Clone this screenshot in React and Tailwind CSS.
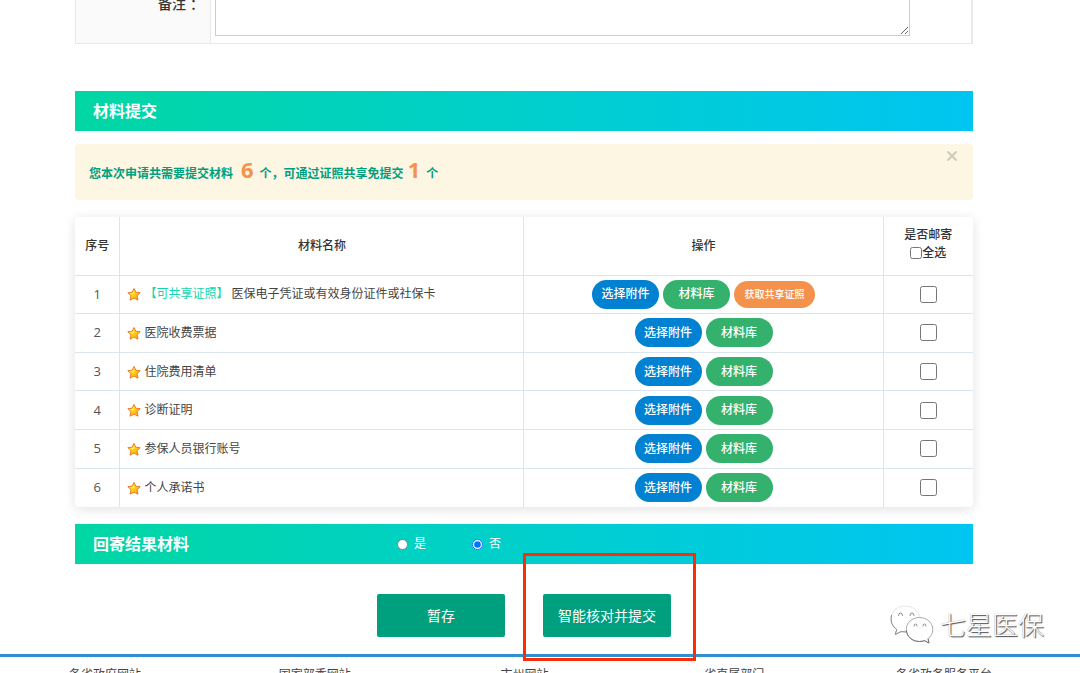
import { useState } from 'react';

const materials = [
  { id: 1, name: '医保电子凭证或有效身份证件或社保卡', shared: true },
  { id: 2, name: '医院收费票据' },
  { id: 3, name: '住院费用清单' },
  { id: 4, name: '诊断证明' },
  { id: 5, name: '参保人员银行账号' },
  { id: 6, name: '个人承诺书' },
];

const footerLinks = ['各省政府网站', '国家部委网站', '市州网站', '省直属部门', '各省政务服务平台'];

const StarIcon = () => (
  <svg width="14" height="14" viewBox="0 0 14 14" className="shrink-0" aria-hidden="true">
    <defs>
      <linearGradient id="star" x1="0" y1="0" x2="1" y2="1">
        <stop offset="0.2" stopColor="#fff02a" />
        <stop offset="1" stopColor="#ff9500" />
      </linearGradient>
    </defs>
    <path
      d="M7 1.5 L8.8 5.2 L13.2 5.7 L10 8.7 L11 13.2 L7 11.1 L3 13.2 L4 8.7 L0.8 5.7 L5.2 5.2 Z"
      fill="url(#star)"
      stroke="#ec7c2c"
      strokeLinejoin="round"
    />
    <path d="M6.6 4 L7.2 6.4 L5.8 7.6 L3.6 6.4 L5.8 6 Z" fill="#fff36a" />
  </svg>
);

const ChatLogo = () => (
  <svg width="44" height="40" viewBox="0 0 44 40" aria-hidden="true">
    <g fill="#fff" strokeLinejoin="round">
      <path d="M15.5 1 C7 1 1 7 1 14.2 C1 18.4 3.2 22 6.7 24.4 L5.3 29.5 L11 26.6 C12.5 27 14 27.2 16 27.2 L30 14 C29.5 6.5 23.5 1 15.5 1 Z" stroke="#dedede" strokeWidth="0.8" />
      <path d="M1.6 10 C0 17 2.5 21.5 6.7 24.4 L5.3 29.5 L11 26.6 L17 27" fill="none" stroke="#888" />
      <path d="M29.5 12.5 C22 12.5 16.3 17.8 16.3 24.5 C16.3 31.2 22 36.5 29.5 36.5 C31.3 36.5 33 36.2 34.6 35.7 L39 38 L38 33.7 C41 31.5 42.8 28.2 42.8 24.5 C42.8 17.8 37 12.5 29.5 12.5 Z" stroke="#aaa" />
      <path d="M16.3 25 C16.8 31.5 22 36.5 29.5 36.5 C31.3 36.5 33 36.2 34.6 35.7 L39 38 L38 33.7" fill="none" stroke="#777" />
    </g>
    <g fill="none" stroke="#8a8a8a" strokeLinecap="round">
      <path d="M8.5 10.5 a2 2.5 0 0 1 4 0" />
      <path d="M20 10.5 a2 2.5 0 0 1 4 0" />
      <path d="M24 21 a1.5 2 0 0 1 3 0" />
      <path d="M33 21 a1.5 2 0 0 1 3 0" />
    </g>
  </svg>
);

const SectionBar = ({ title, children }) => (
  <div className="flex h-10 items-center bg-linear-to-r from-[#00d7a3] to-[#00c5f1] text-white">
    <h2 className="w-[322px] pl-[18px] text-base font-bold">{title}</h2>
    {children}
  </div>
);

const App = () => {
  const [checked, setChecked] = useState([]);
  const [sendBack, setSendBack] = useState('no');
  const [showTip, setShowTip] = useState(true);

  const allChecked = checked.length === materials.length;

  const toggle = (id) => {
    setChecked(checked.includes(id) ? checked.filter((c) => c !== id) : [...checked, id]);
  };

  const toggleAll = () => {
    setChecked(allChecked ? [] : materials.map((m) => m.id));
  };

  return (
    <div className="relative h-screen overflow-hidden bg-white font-['Open_Sans','Noto_Sans_CJK_SC',sans-serif] text-xs text-[#444]">
      <main className="pl-[75px] pr-[107px]">
        {/* tail of the application form */}
        <div className="flex h-11 items-end overflow-hidden">
          <div className="flex w-full shrink-0 border border-r-2 border-[#e8e8e8]">
            <label htmlFor="remark" className="flex w-[135px] items-center justify-end gap-1 border-r border-[#e8e8e8] bg-[#fafafa] pr-[6px] text-sm font-medium text-[#333]">
              <span>备注</span>
              <span>：</span>
            </label>
            <div className="flex-1 py-[7px] pl-1 pr-[61px]">
              <textarea id="remark" className="block h-16 w-full border border-[#ccc] bg-white" />
            </div>
          </div>
        </div>

        <div className="mt-[47px]">
          <SectionBar title="材料提交" />
        </div>

        {showTip && (
          <div className="mt-[13px] flex h-14 items-start justify-between rounded-sm bg-[#fdf6e3] pl-[14px] pr-4">
            <p className="flex items-baseline pt-[10px] font-bold leading-[30px] text-[#009f7e]">
              您本次申请共需要提交材料
              <span className="ml-2 mr-[6px] text-[22px] text-[#f4924c]">6</span>
              个，可通过证照共享免提交
              <span className="ml-1 mr-[6px] text-[22px] text-[#f4924c]">1</span>
              个
            </p>
            <button type="button" aria-label="关闭" onClick={() => setShowTip(false)} className="pt-[7px] text-[#cfcbbb]">
              <svg width="10" height="10" viewBox="0 0 10 10" fill="none" stroke="currentColor" strokeWidth="2">
                <path d="M0.5 0.5 L9.5 9.5 M9.5 0.5 L0.5 9.5" />
              </svg>
            </button>
          </div>
        )}

        <div className="mt-[17px] rounded-sm shadow-[0_2px_12px_rgba(0,0,0,0.12)]">
          <table className="h-[290px] w-full table-fixed border-collapse text-center">
            <thead>
              <tr className="h-[58px] border-b border-[#dbe5ef] text-[#333]">
                <th className="w-[5%] border-r border-[#dbe5ef] font-medium">序号</th>
                <th className="w-[45%] border-r border-[#dbe5ef] font-medium">材料名称</th>
                <th className="w-[40%] border-r border-[#dbe5ef] font-medium">操作</th>
                <th className="w-[10%] pb-1 font-medium leading-[18px]">
                  是否邮寄
                  <label className="flex items-center justify-center">
                    <input type="checkbox" checked={allChecked} onChange={toggleAll} className="size-3" />
                    全选
                  </label>
                </th>
              </tr>
            </thead>
            <tbody>
              {materials.map((item) => (
                <tr key={item.id} className="h-[38px] border-b border-[#dbe5ef] last:border-b-0">
                  <td className="border-r border-[#dbe5ef] text-[13px] text-[#555]">{item.id}</td>
                  <td className="border-r border-[#dbe5ef]">
                    <div className="flex items-center gap-[3px] pl-[7px]">
                      <StarIcon />
                      {item.shared && <span className="text-[#12d6ae]">【可共享证照】</span>}
                      <span>{item.name}</span>
                    </div>
                  </td>
                  <td className="border-r border-[#dbe5ef]">
                    <div className="flex items-center justify-center gap-1 font-medium text-white">
                      <button type="button" className="h-[29px] w-[67px] rounded-full bg-[#0081d2]">选择附件</button>
                      <button type="button" className="h-[29px] w-[67px] rounded-full bg-[#33b16d]">材料库</button>
                      {item.shared && (
                        <button type="button" className="h-[27px] w-[81px] rounded-full bg-[#f4924c] text-[10px]">获取共享证照</button>
                      )}
                    </div>
                  </td>
                  <td>
                    <input
                      type="checkbox"
                      aria-label={item.name}
                      checked={checked.includes(item.id)}
                      onChange={() => toggle(item.id)}
                      className="mx-auto block size-[17px]"
                    />
                  </td>
                </tr>
              ))}
            </tbody>
          </table>
        </div>

        <div className="mt-[17px]">
          <SectionBar title="回寄结果材料">
            <div className="flex gap-[46px]">
              <label className="flex items-center gap-[6px]">
                <input type="radio" name="sendBack" checked={sendBack === 'yes'} onChange={() => setSendBack('yes')} className="size-[11px]" />
                是
              </label>
              <label className="flex items-center gap-[6px]">
                <input type="radio" name="sendBack" checked={sendBack === 'no'} onChange={() => setSendBack('no')} className="size-[11px]" />
                否
              </label>
            </div>
          </SectionBar>
        </div>

        <div className="mt-[30px] flex justify-center gap-[38px] text-sm text-white">
          <button type="button" className="h-[43px] w-32 rounded-xs bg-[#009f7e]">暂存</button>
          <div className="relative">
            <button type="button" className="h-[43px] w-32 rounded-xs bg-[#009f7e]">智能核对并提交</button>
            <span className="pointer-events-none absolute -bottom-6 -left-5 -right-[25px] -top-[41px] z-10 border-3 border-[#fb2c08]" />
          </div>
        </div>
      </main>

      <footer className="mt-[17px] border-t-3 border-[#3090d0] pt-2">
        <nav className="mr-[31px] grid grid-cols-5 text-center">
          {footerLinks.map((link) => (
            <a key={link} href="#" className="leading-5">{link}</a>
          ))}
        </nav>
      </footer>

      {/* account watermark */}
      <div className="absolute bottom-7 right-9 flex items-center gap-[6px] text-[26px] font-light leading-10 text-white [text-shadow:1px_1px_1px_#444,0_0_1px_#999]">
        <ChatLogo />
        七星医保
      </div>
    </div>
  );
};

export default App;
